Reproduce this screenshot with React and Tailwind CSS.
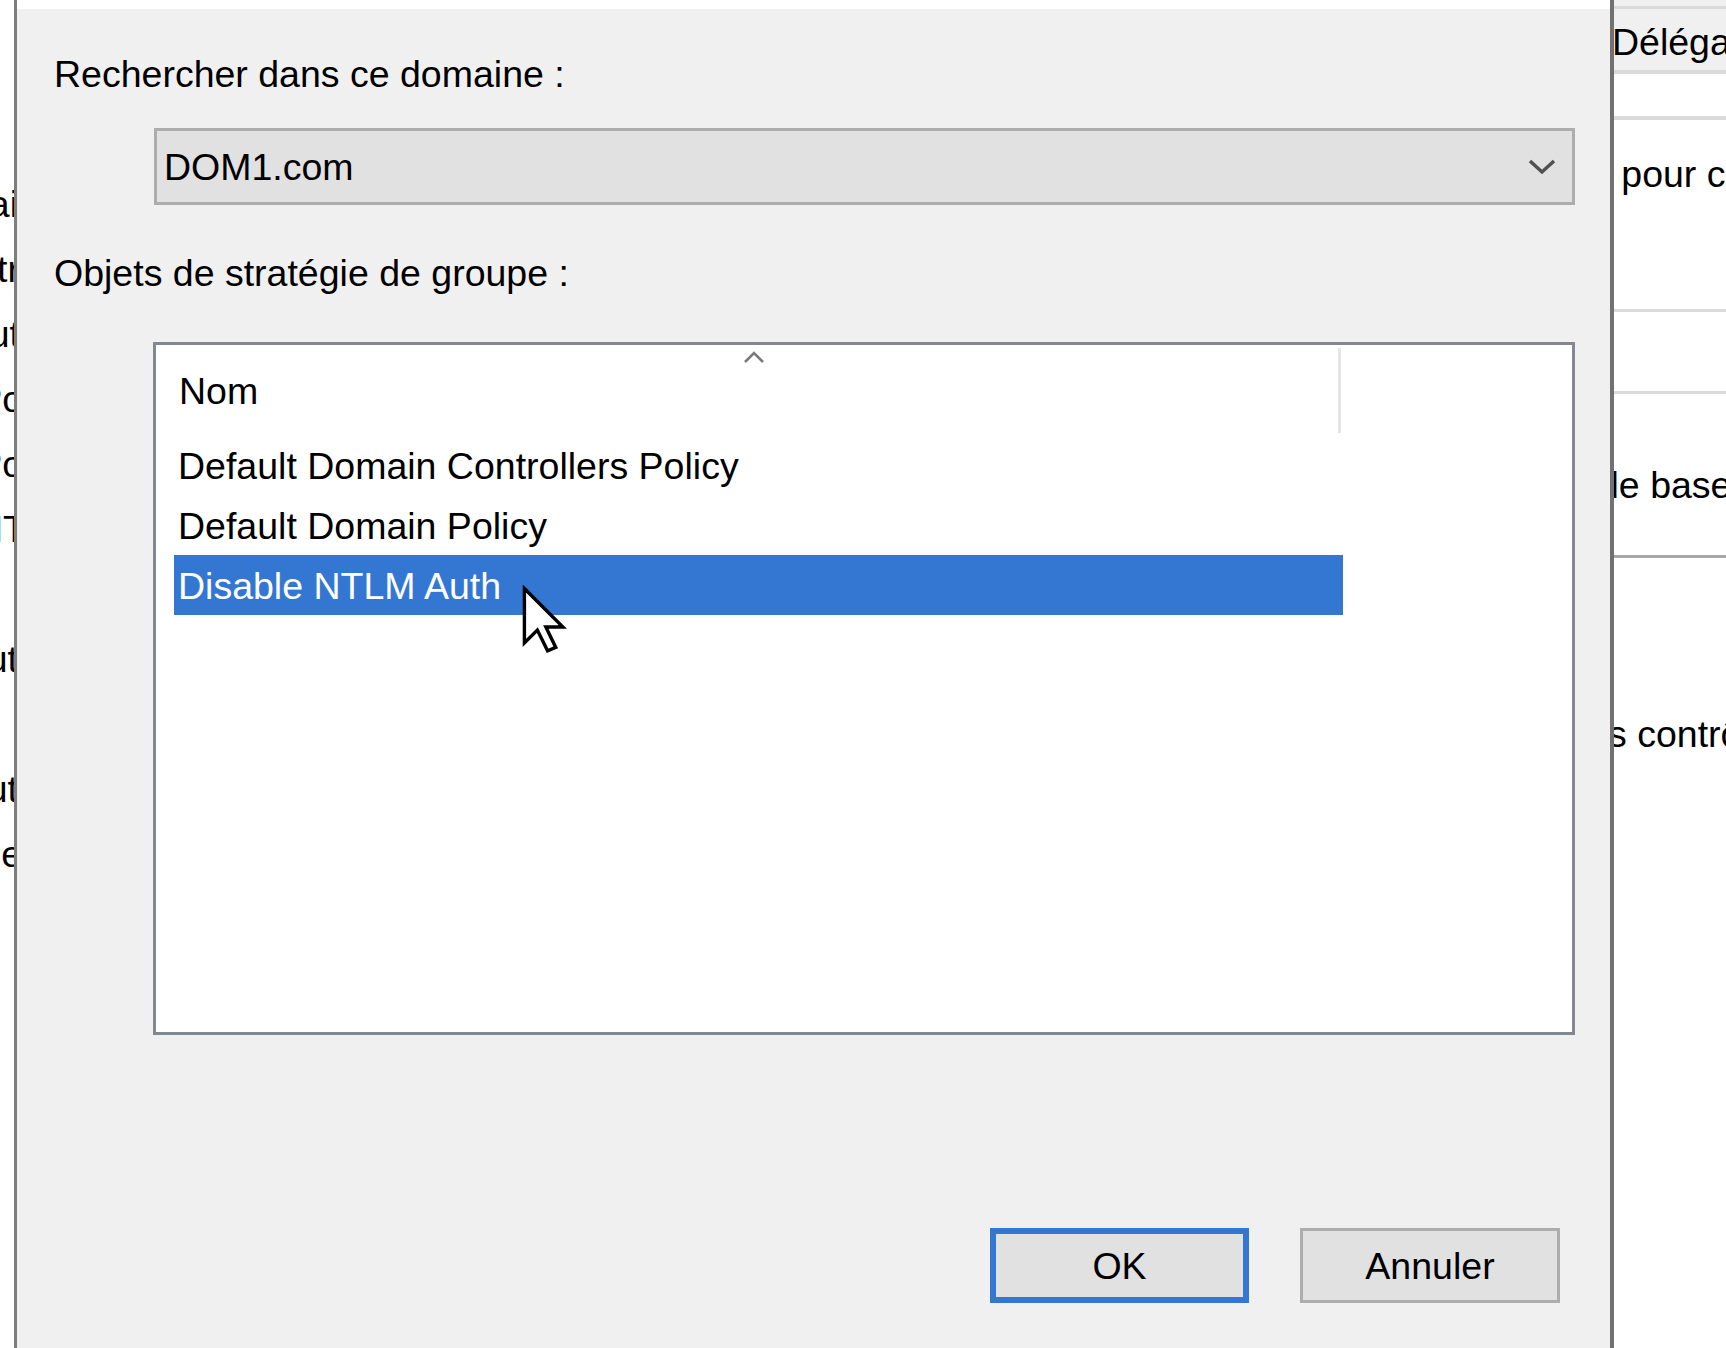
import React from "react";

const leftRows = [
  { t: "Domai", m: "mr-[-4px]" },
  { t: "Centr", m: "mr-[-6px]" },
  { t: "Aut", m: "mr-[-6px]" },
  { t: "Po", m: "mr-[-9px]" },
  { t: "Po", m: "mr-[-9px]" },
  { t: "NT", m: "mr-[-12px]" },
  { t: "", m: "" },
  { t: "ut", m: "mr-[-4px]" },
  { t: "", m: "" },
  { t: "ut", m: "mr-[-4px]" },
  { t: "le", m: "mr-[-8px]" },
];

function Chevron() {
  return (
    <svg width="28" height="16" viewBox="0 0 28 16" className="ml-auto mr-[16px]">
      <polyline points="2,2 14,13 26,2" fill="none" stroke="#505050" strokeWidth="3.5" />
    </svg>
  );
}

function Cursor() {
  return (
    <svg
      width="46"
      height="70"
      viewBox="-0.5 -0.5 13.5 20.5"
      className="absolute left-[347px] top-[30px]"
    >
      <polygon
        points="0.5,0.5 0.5,16.5 4.3,12.7 7.3,18.8 9.7,17.8 6.8,11.8 11.8,11.8"
        fill="#ffffff"
        stroke="#000000"
        strokeWidth="1"
        strokeLinejoin="miter"
      />
    </svg>
  );
}

export default function App() {
  return (
    <div className="w-[1726px] h-[1348px] flex overflow-hidden bg-white text-black text-[37.5px] font-['Liberation_Sans',Arial,sans-serif]">
      {/* left partial window */}
      <div className="w-[14px] shrink-0 overflow-hidden bg-white pt-[172px] flex flex-col">
        {leftRows.map((r, i) => (
          <div key={i} className="h-[65px] leading-[65px] flex justify-end whitespace-nowrap">
            <span className={r.m}>{r.t}</span>
          </div>
        ))}
      </div>
      <div className="w-[3px] shrink-0 bg-[#7d7d7d]" />

      {/* dialog */}
      <div className="w-[1593px] shrink-0 flex flex-col">
        <div className="h-[9px] shrink-0 bg-white" />
        <div className="flex-1 bg-[#f0f0f0] flex flex-col pl-[37px] pr-[35px]">
          <div className="mt-[44px] h-[42px] leading-[42px] whitespace-nowrap">
            Rechercher dans ce domaine :
          </div>

          <div className="mt-[33px] ml-[100px] w-[1421px] h-[77px] border-[3px] border-[#adadad] bg-[#e1e1e1] flex items-center pl-[7px]">
            <span className="leading-[42px]">DOM1.com</span>
            <Chevron />
          </div>

          <div className="mt-[47px] h-[42px] leading-[42px] whitespace-nowrap">
            Objets de stratégie de groupe :
          </div>

          <div className="mt-[48px] ml-[99px] w-[1422px] h-[693px] border-[3px] border-[#828790] bg-white flex flex-col">
            <div className="h-[90px] shrink-0 flex">
              <div className="relative w-[1182px] pl-[23px] pt-[25px] leading-[42px]">
                Nom
                <svg
                  width="24"
                  height="14"
                  viewBox="0 0 24 14"
                  className="absolute left-[586px] top-[5px]"
                >
                  <polyline points="3,12 12,3 21,12" fill="none" stroke="#7a7a7a" strokeWidth="2.6" />
                </svg>
              </div>
              <div className="w-[3px] mt-[3px] h-[85px] bg-[#e5e5e5]" />
            </div>
            <div className="pl-[18px] flex flex-col">
              <div className="w-[1169px] h-[60px] leading-[62px] pl-[4px] whitespace-nowrap">
                Default Domain Controllers Policy
              </div>
              <div className="w-[1169px] h-[60px] leading-[62px] pl-[4px] whitespace-nowrap">
                Default Domain Policy
              </div>
              <div className="relative w-[1169px] h-[60px] leading-[62px] pl-[4px] whitespace-nowrap bg-[#3477d3] text-white">
                Disable NTLM Auth
                <Cursor />
              </div>
            </div>
          </div>

          <div className="mt-[193px] flex justify-end gap-[51px] mr-[15px]">
            <button className="w-[259px] h-[75px] border-[6px] border-[#3477d3] bg-[#e1e1e1] flex items-center justify-center leading-[42px]">
              OK
            </button>
            <button className="w-[260px] h-[75px] border-[3px] border-[#adadad] bg-[#e1e1e1] flex items-center justify-center leading-[42px]">
              Annuler
            </button>
          </div>
        </div>
      </div>

      <div className="w-[4px] shrink-0 bg-[#717171]" />

      {/* right partial window */}
      <div className="flex-1 flex flex-col overflow-hidden bg-white whitespace-nowrap">
        <div className="h-[6px] shrink-0 bg-[#f0f0f0]" />
        <div className="h-[3px] shrink-0 bg-[#dadada]" />
        <div className="h-[61px] shrink-0 bg-[#f0f0f0] pt-[12px] leading-[42px]">
          <span className="ml-[-2px]">Délégation</span>
        </div>
        <div className="h-[4px] shrink-0 bg-[#dadada]" />
        <div className="h-[42px] shrink-0" />
        <div className="h-[4px] shrink-0 bg-[#dadada]" />
        <div className="h-[189px] shrink-0 pt-[33px] leading-[42px]">
          <span className="ml-[-24px]">é pour cette</span>
        </div>
        <div className="h-[3px] shrink-0 bg-[#dadada]" />
        <div className="h-[79px] shrink-0" />
        <div className="h-[3px] shrink-0 bg-[#dadada]" />
        <div className="h-[161px] shrink-0 pt-[70px] leading-[42px]">
          <span className="ml-[-16px]">de base</span>
        </div>
        <div className="h-[3px] shrink-0 bg-[#a8a8a8]" />
        <div className="flex-1 pt-[155px] leading-[42px]">
          <span className="ml-[-6px]">s contrôleurs</span>
        </div>
      </div>
    </div>
  );
}
